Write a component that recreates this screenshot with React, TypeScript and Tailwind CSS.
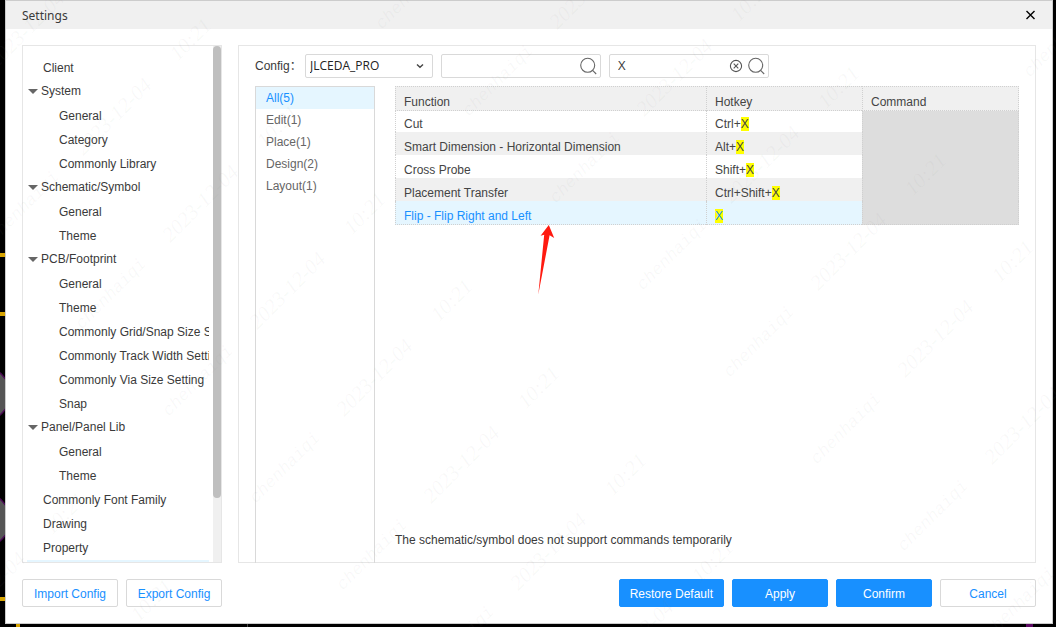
import React, { useState } from "react";

type TreeItem = { label: string; level: "root" | "group" | "child" };

const TREE: TreeItem[] = [
  { label: "Client", level: "root" },
  { label: "System", level: "group" },
  { label: "General", level: "child" },
  { label: "Category", level: "child" },
  { label: "Commonly Library", level: "child" },
  { label: "Schematic/Symbol", level: "group" },
  { label: "General", level: "child" },
  { label: "Theme", level: "child" },
  { label: "PCB/Footprint", level: "group" },
  { label: "General", level: "child" },
  { label: "Theme", level: "child" },
  { label: "Commonly Grid/Snap Size Setting", level: "child" },
  { label: "Commonly Track Width Setting", level: "child" },
  { label: "Commonly Via Size Setting", level: "child" },
  { label: "Snap", level: "child" },
  { label: "Panel/Panel Lib", level: "group" },
  { label: "General", level: "child" },
  { label: "Theme", level: "child" },
  { label: "Commonly Font Family", level: "root" },
  { label: "Drawing", level: "root" },
  { label: "Property", level: "root" },
];

const LEVEL_CLASS = {
  root: "pl-4",
  group: "gap-[3px] pl-px pb-0.5",
  child: "pl-8",
};

const CATEGORIES = ["All(5)", "Edit(1)", "Place(1)", "Design(2)", "Layout(1)"];

const HOTKEYS = [
  { name: "Cut", prefix: "Ctrl+" },
  { name: "Smart Dimension - Horizontal Dimension", prefix: "Alt+" },
  { name: "Cross Probe", prefix: "Shift+" },
  { name: "Placement Transfer", prefix: "Ctrl+Shift+" },
  { name: "Flip - Flip Right and Left", prefix: "" },
];

function SearchIcon() {
  return (
    <svg className="size-[18px] shrink-0" viewBox="0 0 18 18" fill="none" stroke="#666" strokeWidth="1.1" aria-hidden="true">
      <circle cx="8.7" cy="8.3" r="7" />
      <path d="M13.6 13.4 17.2 17" />
    </svg>
  );
}

function ClearIcon() {
  return (
    <svg className="size-[14px]" viewBox="0 0 14 14" fill="none" stroke="#555" strokeWidth="1.1" aria-hidden="true">
      <circle cx="7" cy="7" r="5.6" />
      <path d="m4.7 4.7 4.6 4.6m0-4.6-4.6 4.6" />
    </svg>
  );
}

function CanvasBackdrop() {
  return (
    <>
      <svg className="absolute left-0 top-0 h-full w-10" aria-hidden="true">
        <path d="M0 255h6M0 314h6M0 599h20" stroke="#d6a300" strokeWidth="4" />
        <path d="M18 597v40" stroke="#d6a300" strokeWidth="4" />
        <circle cx="-17" cy="394" r="27" fill="#555" stroke="#4b0a55" strokeWidth="1.5" />
        <circle cx="-17" cy="520" r="27" fill="#555" stroke="#4b0a55" strokeWidth="1.5" />
      </svg>
      <div className="absolute bottom-0 right-[23px] h-1 w-[7px] bg-[#5c0a63]" />
      <div className="absolute bottom-0 left-[247px] h-1 w-px bg-[#444]" />
    </>
  );
}

const WATERMARK_WORDS = [
  { text: "chenhaiqi", x: 371, y: 554, className: "font-['Liberation_Mono',monospace] text-[17px]" },
  { text: "2023-12-04", x: 462, y: 465, className: "font-['Liberation_Serif',serif] text-[21px]" },
  { text: "10:21", x: 539, y: 388, className: "font-['Liberation_Serif',serif] text-[21px]" },
];

function Watermark() {
  const marks: React.ReactNode[] = [];
  for (let row = -8; row <= 10; row++) {
    for (let col = -3; col <= 3; col++) {
      for (const word of WATERMARK_WORDS) {
        const x = word.x + row * 87 + col * 300;
        const y = word.y + row * 87 - col * 300;
        if (x < -20 || x > 1080 || y < -20 || y > 650) continue;
        marks.push(
          <text key={`${word.text}${row}/${col}`} className={word.className} x={x} y={y + 6} transform={`rotate(-45 ${x} ${y})`}>
            {word.text}
          </text>
        );
      }
    }
  }
  return (
    <svg
      className="pointer-events-none absolute inset-0 h-full w-full italic"
      fill="#808080"
      fillOpacity="0.06"
      textAnchor="middle"
      aria-hidden="true"
    >
      {marks}
    </svg>
  );
}

function Sidebar() {
  return (
    <nav aria-label="Settings sections" className="flex w-[200px] shrink-0 overflow-hidden border border-[#e6e6e6]">
      <ul className="mr-1 h-0 min-h-full min-w-0 flex-1 overflow-hidden pl-1 pt-2.5">
        {TREE.map((item, i) => (
          <li key={i}>
            <button type="button" className={`flex h-6 w-full items-center overflow-hidden whitespace-nowrap ${LEVEL_CLASS[item.level]}`}>
              {item.level === "group" && (
                <svg className="h-[5px] w-[10px] shrink-0" viewBox="0 0 10 5" fill="#666" aria-hidden="true">
                  <path d="M0 0h10L5 5z" />
                </svg>
              )}
              <span>{item.label}</span>
            </button>
          </li>
        ))}
        <li className="h-6 bg-[#e5f6ff]" aria-hidden="true" />
      </ul>
      <div className="w-2 shrink-0 bg-[#f0f0f0]">
        <div className="h-[87.6%] rounded-full bg-[#bfbfbf]" />
      </div>
    </nav>
  );
}

function Toolbar() {
  const [func, setFunc] = useState("");
  const [key, setKey] = useState("X");
  return (
    <div className="flex items-center gap-2">
      <div className="flex items-center gap-0.5">
        <label htmlFor="config" className="w-12 whitespace-nowrap">
          Config：
        </label>
        <div className="relative">
          <select
            id="config"
            defaultValue="JLCEDA_PRO"
            className="h-6 w-32 appearance-none rounded-[2px] border border-[#d9d9d9] bg-white pl-1 pr-6 font-['Open_Sans','Noto_Sans',sans-serif] text-xs text-[#222] outline-none"
          >
            <option>JLCEDA_PRO</option>
          </select>
          <svg className="pointer-events-none absolute right-[9px] top-2 h-2 w-2" viewBox="0 0 8 8" fill="none" stroke="#444" strokeWidth="1.4" aria-hidden="true">
            <path d="m1 2.5 3 2.8 3-2.8" />
          </svg>
        </div>
      </div>
      <div className="flex h-6 w-40 items-center rounded-[2px] border border-[#d9d9d9] bg-white pl-2 pr-[3px]">
        <input aria-label="Search function" value={func} onChange={(e) => setFunc(e.target.value)} className="min-w-0 flex-1 outline-none" />
        <SearchIcon />
      </div>
      <div className="flex h-6 w-40 items-center gap-1 rounded-[2px] border border-[#d9d9d9] bg-white pl-2 pr-[3px]">
        <input
          aria-label="Search hotkey"
          value={key}
          onChange={(e) => setKey(e.target.value)}
          className="min-w-0 flex-1 font-['Open_Sans','Noto_Sans',sans-serif] text-[13px] outline-none"
        />
        <button type="button" aria-label="Clear" onClick={() => setKey("")}>
          <ClearIcon />
        </button>
        <SearchIcon />
      </div>
    </div>
  );
}

function HotkeyTable() {
  return (
    <table className="w-full table-fixed border-separate border-spacing-0 text-left leading-[14px] text-[#444]">
      <thead>
        <tr className="bg-[#f0f0f0]">
          <th className="border-y border-l border-dotted border-[#d0d0d0] px-2 pb-px pt-2 font-normal">Function</th>
          <th className="w-[156px] border-y border-l border-dotted border-[#d0d0d0] px-2 pb-px pt-2 font-normal">Hotkey</th>
          <th className="w-[157px] border border-dotted border-[#d0d0d0] px-2 pb-px pt-2 font-normal">Command</th>
        </tr>
      </thead>
      <tbody>
        {HOTKEYS.map((row, i) => {
          const last = i === HOTKEYS.length - 1;
          const tone = last ? "bg-[#e5f6ff] text-[#1890ff]" : i % 2 ? "bg-[#f0f0f0]" : "bg-white";
          const cell = `border-l border-dotted border-[#d0d0d0] px-2 pb-px ${i === 0 ? "pt-1.5" : "pt-2"} ${last ? "border-b" : ""}`;
          return (
            <tr key={row.name} className={tone}>
              <td className={cell}>{row.name}</td>
              <td className={cell}>
                {row.prefix}
                <mark className="bg-[#ffff00] text-inherit">X</mark>
              </td>
              <td className={`${cell} border-r bg-[#dddddd]`} />
            </tr>
          );
        })}
      </tbody>
    </table>
  );
}

function ActionButton({ children, primary = false }: { children: React.ReactNode; primary?: boolean }) {
  return (
    <button
      type="button"
      className={`h-7 min-w-24 whitespace-nowrap rounded-[2px] border px-2.5 pt-0.5 ${
        primary ? "border-[#1890ff] bg-[#1890ff] text-white" : "border-[#d9d9d9] bg-white text-[#1890ff]"
      }`}
    >
      {children}
    </button>
  );
}

export default function App() {
  const [active, setActive] = useState(0);
  return (
    <div className="relative flex h-screen min-h-[560px] flex-col overflow-hidden bg-black pb-[3px] pl-[5px] pr-[3px] font-['Liberation_Sans','Noto_Sans_CJK_SC',sans-serif] text-xs text-[#3a3a3a]">
      <CanvasBackdrop />
      <div role="dialog" aria-labelledby="title" className="relative flex min-h-0 flex-1 flex-col border border-[#cccccc] bg-white">
        <header className="flex h-7 shrink-0 items-center justify-between bg-[#f0f0f0] pl-4 pr-4">
          <h1 id="title" className="pt-0.5 font-['Noto_Sans',sans-serif] text-xs">
            Settings
          </h1>
          <button type="button" aria-label="Close" className="flex size-[11px] items-center justify-center">
            <svg className="size-[11px]" viewBox="0 0 11 11" fill="none" stroke="#000" strokeWidth="1.4" aria-hidden="true">
              <path d="m1.5 1 8 8m0-8-8 8" />
            </svg>
          </button>
        </header>

        <div className="flex min-h-0 flex-1 gap-4 px-4 pt-4">
          <Sidebar />
          <main className="flex min-w-0 flex-1 flex-col gap-2 border border-[#e6e6e6] px-4 pt-2">
            <Toolbar />
            <div className="flex min-h-0 flex-1 gap-5">
              <ul className="-mb-px w-[120px] shrink-0 border-x border-t border-[#d9d9d9]">
                {CATEGORIES.map((name, i) => (
                  <li key={name}>
                    <button
                      type="button"
                      onClick={() => setActive(i)}
                      className={`flex h-[22px] w-full items-center px-2.5 ${i === active ? "bg-[#e5f6ff] text-[#1890ff]" : "text-[#666]"}`}
                    >
                      {name}
                    </button>
                  </li>
                ))}
              </ul>
              <section className="relative flex min-w-0 flex-1 flex-col">
                <HotkeyTable />
                <p className="mt-auto pb-3.5 leading-4">The schematic/symbol does not support commands temporarily</p>
                <svg className="pointer-events-none absolute left-[143px] top-[138px] h-[72px] w-5" viewBox="0 0 20 72" fill="#ff1a10" aria-hidden="true">
                  <path d="M10.8 1 2.6 11.8 6.2 10.7 .3 70.5 11.6 11.2 16.2 14z" />
                </svg>
              </section>
            </div>
          </main>
        </div>

        <footer className="flex shrink-0 justify-between p-4">
          <div className="flex gap-2">
            <ActionButton>Import Config</ActionButton>
            <ActionButton>Export Config</ActionButton>
          </div>
          <div className="flex gap-2">
            <ActionButton primary>Restore Default</ActionButton>
            <ActionButton primary>Apply</ActionButton>
            <ActionButton primary>Confirm</ActionButton>
            <ActionButton>Cancel</ActionButton>
          </div>
        </footer>
      </div>
      <Watermark />
    </div>
  );
}
